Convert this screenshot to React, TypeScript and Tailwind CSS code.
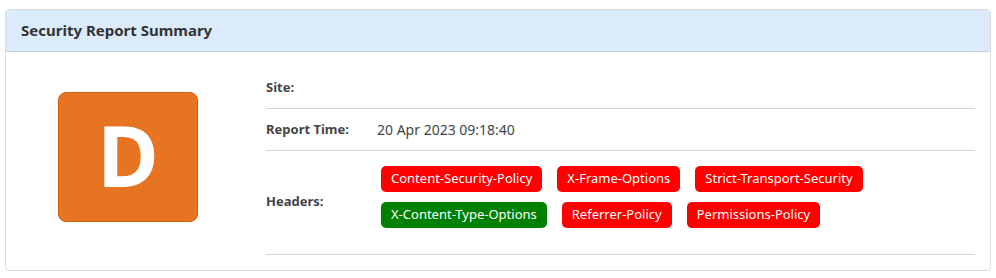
import { memo } from "react";

type Header = { name: string; ok: boolean };

const headers: Header[][] = [
  [
    { name: "Content-Security-Policy", ok: false },
    { name: "X-Frame-Options", ok: false },
    { name: "Strict-Transport-Security", ok: false },
  ],
  [
    { name: "X-Content-Type-Options", ok: true },
    { name: "Referrer-Policy", ok: false },
    { name: "Permissions-Policy", ok: false },
  ],
];

const Badge = ({ name, ok }: Header) => (
  <span
    className={`inline-flex items-center h-[26px] px-[10px] rounded-[5px] text-[13px] text-white whitespace-nowrap ${
      ok ? "bg-[#008000]" : "bg-[#ff0000]"
    }`}
  >
    {name}
  </span>
);

const App = memo(() => {
  return (
    <div className="w-[996px] h-[278px] bg-white pt-[9px] px-[5px] font-['Noto_Sans',sans-serif] text-[#333]">
      <div className="w-[986px] rounded-[4px] border border-[#dcdcdc] overflow-hidden">
        <div className="h-[42px] flex items-center px-[15px] bg-[#dbebfc] border-b border-[#c9d4e0]">
          <h2 className="m-0 text-[15px] font-bold text-[#333]">Security Report Summary</h2>
        </div>
        <div className="flex flex-row items-center pt-[15px] pb-[15px] pl-[15px] pr-[15px]">
          <div className="w-[214px] mr-[31px] flex justify-center">
            <div className="w-[140px] h-[130px] rounded-[8px] border border-[#d2600c] bg-[#e67422] flex items-center justify-center mt-[-9px]">
              <span className="text-white font-bold text-[84px] leading-none mt-[-4px]">D</span>
            </div>
          </div>
          <div className="flex-1 flex flex-col text-[13px]">
            <div className="flex flex-row items-center h-[42px] border-b border-[#d6d6d6]">
              <div className="w-[111px] font-bold text-[#444]">Site:</div>
              <div className="text-[#444]"></div>
            </div>
            <div className="flex flex-row items-center h-[42px] border-b border-[#d6d6d6]">
              <div className="w-[111px] font-bold text-[#444]">Report Time:</div>
              <div className="text-[14px] text-[#444]">20 Apr 2023 09:18:40</div>
            </div>
            <div className="flex flex-row items-center pt-[15px] pb-[26px] border-b border-[#d6d6d6]">
              <div className="w-[115px] font-bold text-[#444] pt-[10px]">Headers:</div>
              <div className="flex flex-col gap-[10px]">
                {headers.map((row, i) => (
                  <div key={i} className="flex flex-row gap-[15px]">
                    {row.map((h) => (
                      <Badge key={h.name} {...h} />
                    ))}
                  </div>
                ))}
              </div>
            </div>
          </div>
        </div>
      </div>
    </div>
  );
});

export default App;
